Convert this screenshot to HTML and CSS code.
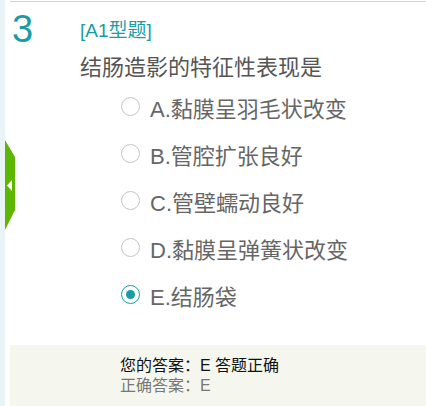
FILE: index.html
```html
<!doctype html>
<html lang="zh-CN">

<head>
  <meta charset="utf-8">
  <meta name="viewport" content="width=device-width, initial-scale=1">
  <link rel="stylesheet" href="styles.css">
  <title>题目</title>
</head>

<body>
  <div class="page">
    <div class="sidebar"></div>
    <div class="toggle">
      <svg viewBox="0 0 10 90" width="10" height="90">
        <polygon fill="#5db702" points="0,0 10,17 10,70 0,90" />
        <polygon fill="#fff" points="2,45.5 7,40 7,51" />
      </svg>
    </div>
    <div class="content">
      <div class="question">
        <div class="num">3</div>
        <div class="body">
          <div class="type">[A1型题]</div>
          <div class="stem">结肠造影的特征性表现是</div>
          <ul class="options">
            <li class="option"><span class="radio"></span>A.黏膜呈羽毛状改变</li>
            <li class="option"><span class="radio"></span>B.管腔扩张良好</li>
            <li class="option"><span class="radio"></span>C.管壁蠕动良好</li>
            <li class="option"><span class="radio"></span>D.黏膜呈弹簧状改变</li>
            <li class="option"><span class="radio checked"></span>E.结肠袋</li>
          </ul>
        </div>
      </div>
      <div class="answer">
        <div class="mine">您的答案：E 答题正确</div>
        <div class="right">正确答案：E</div>
      </div>
    </div>
  </div>
</body>

</html>
```

FILE: styles.css
```css
body {
  margin: 0;
  background: #fff;
  font-family: "Liberation Sans", "Noto Sans CJK SC", sans-serif;
  color: #555;
}

.page {
  position: relative;
  display: flex;
  min-height: 406px;
}

.sidebar {
  width: 5px;
  background: #eaf3f6;
}

.toggle {
  position: absolute;
  left: 5px;
  top: 140px;
  width: 10px;
  height: 90px;
}

.toggle svg {
  display: block;
}

.content {
  flex: 1;
  margin-left: 5px;
  margin-top: 1px;
  border-top: 1px solid #d3d3d3;
}

.question {
  display: flex;
}

.num {
  width: 68px;
  padding-left: 2px;
  margin-top: 8px;
  font-size: 38px;
  line-height: 38px;
  color: #1a9ca4;
}

.body {
  flex: 1;
  padding-top: 17px;
}

.type {
  font-size: 19px;
  line-height: 24px;
  color: #1a9ca4;
}

.stem {
  margin-top: 10px;
  font-size: 22px;
  line-height: 30px;
  color: #555;
}

.options {
  list-style: none;
  margin: 0;
  padding: 0 0 0 41px;
}

.option {
  display: flex;
  align-items: center;
  height: 47px;
  font-size: 22px;
  color: #666;
}

.radio {
  box-sizing: border-box;
  width: 19px;
  height: 19px;
  margin-right: 10px;
  border: 1.5px solid #c4c4c4;
  border-radius: 50%;
  display: flex;
  align-items: center;
  justify-content: center;
}

.radio.checked {
  border-color: #1a9ca4;
}

.radio.checked::after {
  content: "";
  width: 9px;
  height: 9px;
  border-radius: 50%;
  background: #1a9ca4;
}

.answer {
  margin-top: 27px;
  padding: 11px 0 14px 110px;
  background: #f5f7ee;
  font-size: 16px;
  line-height: 20px;
}

.answer .mine {
  color: #111;
}

.answer .right {
  color: #777;
}
```
